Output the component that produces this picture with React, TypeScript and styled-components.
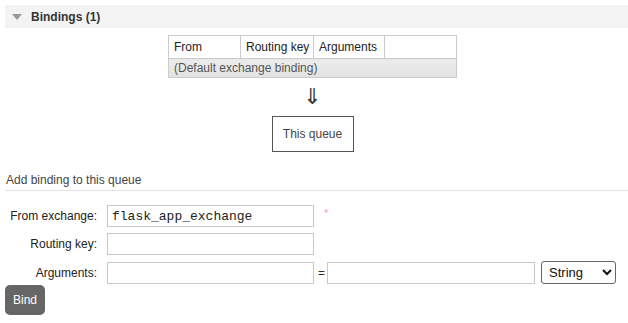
import React from "react";
import styled, { createGlobalStyle } from "styled-components";

const GlobalStyle = createGlobalStyle`
  body {
    margin: 0;
    background: #fff;
    font-family: "Liberation Sans", Arial, sans-serif;
    font-size: 12px;
    color: #484848;
  }
`;

const Page = styled.div`
  padding: 5px 0 0 5px;
`;

// collapsible section header
const SectionHeader = styled.div`
  display: flex;
  align-items: center;
  height: 23px;
  background: #f3f3f3;
  gap: 9px;
  padding-left: 7px;
`;

const Triangle = styled.span`
  width: 0;
  height: 0;
  border-left: 5px solid transparent;
  border-right: 5px solid transparent;
  border-top: 6px solid #999;
  margin-top: 1px;
`;

const HeaderTitle = styled.span`
  font-weight: bold;
  font-size: 12px;
  color: #333;
`;

const Diagram = styled.div`
  display: flex;
  flex-direction: column;
  align-items: center;
  padding-right: 8px;
`;

const BindingTable = styled.table`
  margin-top: 7px;
  border-collapse: collapse;
  width: 289px;
  table-layout: fixed;
  border: 1px solid #ccc;
`;

const Th = styled.th<{ $first?: boolean }>`
  height: 22px;
  padding: 0 4px 0 5px;
  text-align: left;
  font-weight: normal;
  white-space: nowrap;
  color: #222;
  border-left: ${(p) => (p.$first ? "none" : "1px solid #ccc")};
  border-bottom: 1px solid #ccc;
  background: #fff;
`;

const Td = styled.td`
  height: 18px;
  padding: 0 5px;
  color: #555;
  background: linear-gradient(#ececec, #e2e2e2);
`;

const Arrow = styled.div`
  height: 38px;
  display: flex;
  align-items: center;
  justify-content: center;
  font-size: 22px;
  color: #333;
  font-family: "DejaVu Sans", sans-serif;
  padding-bottom: 1px;
  box-sizing: border-box;
`;

const QueueBox = styled.div`
  box-sizing: border-box;
  width: 82px;
  height: 36px;
  border: 1px solid #555;
  display: flex;
  align-items: center;
  justify-content: center;
  color: #444;
`;

const SubTitle = styled.div`
  margin-top: 21px;
  padding: 0 0 3px 1px;
  line-height: 14px;
  border-bottom: 1px solid #e2e2e2;
  color: #444;
`;

const Form = styled.div`
  margin-top: 14px;
  display: flex;
  flex-direction: column;
  gap: 6px;
`;

const Row = styled.div`
  display: flex;
  align-items: center;
`;

const Label = styled.label`
  width: 92px;
  text-align: right;
  color: #222;
  margin-right: 10px;
`;

const TextInput = styled.input<{ $w?: number }>`
  box-sizing: border-box;
  width: ${(p) => p.$w ?? 207}px;
  height: 22px;
  border: 1px solid #c8c8c8;
  padding: 0 4px;
  font-family: "Liberation Mono", "Courier New", monospace;
  font-size: 13px;
  color: #222;
  outline: none;
`;

const Required = styled.span`
  color: #f4a0a0;
  font-size: 11px;
  margin: -6px 0 0 10px;
`;

const Equals = styled.span`
  margin: 0 2px 0 4px;
  color: #333;
`;

const Select = styled.select`
  margin-left: 6px;
  width: 75px;
  height: 23px;
  border: 1px solid #666;
  border-radius: 3px;
  background: #fff;
  font-family: "Liberation Sans", Arial, sans-serif;
  font-size: 13px;
  color: #111;
  padding-left: 3px;
`;

const BindButton = styled.button`
  margin-top: 1px;
  width: 40px;
  height: 30px;
  border: none;
  border-radius: 5px;
  background: #666;
  color: #fff;
  font-family: "Liberation Sans", Arial, sans-serif;
  font-size: 12px;
  padding: 0;
`;

export default function App() {
  return (
    <Page>
      <GlobalStyle />
      <SectionHeader>
        <Triangle />
        <HeaderTitle>Bindings (1)</HeaderTitle>
      </SectionHeader>

      <Diagram>
        <BindingTable>
          <colgroup>
            <col style={{ width: 72 }} />
            <col style={{ width: 73 }} />
            <col style={{ width: 71 }} />
            <col style={{ width: 72 }} />
          </colgroup>
          <thead>
            <tr>
              <Th $first>From</Th>
              <Th>Routing key</Th>
              <Th>Arguments</Th>
              <Th />
            </tr>
          </thead>
          <tbody>
            <tr>
              <Td colSpan={4}>(Default exchange binding)</Td>
            </tr>
          </tbody>
        </BindingTable>
        <Arrow>⇓</Arrow>
        <QueueBox>This queue</QueueBox>
      </Diagram>

      <SubTitle>Add binding to this queue</SubTitle>

      <Form>
        <Row>
          <Label>From exchange:</Label>
          <TextInput defaultValue="flask_app_exchange" />
          <Required>*</Required>
        </Row>
        <Row>
          <Label>Routing key:</Label>
          <TextInput />
        </Row>
        <Row>
          <Label>Arguments:</Label>
          <TextInput />
          <Equals>=</Equals>
          <TextInput $w={208} />
          <Select defaultValue="String">
            <option>String</option>
            <option>Number</option>
            <option>Boolean</option>
          </Select>
        </Row>
      </Form>
      <BindButton>Bind</BindButton>
    </Page>
  );
}
